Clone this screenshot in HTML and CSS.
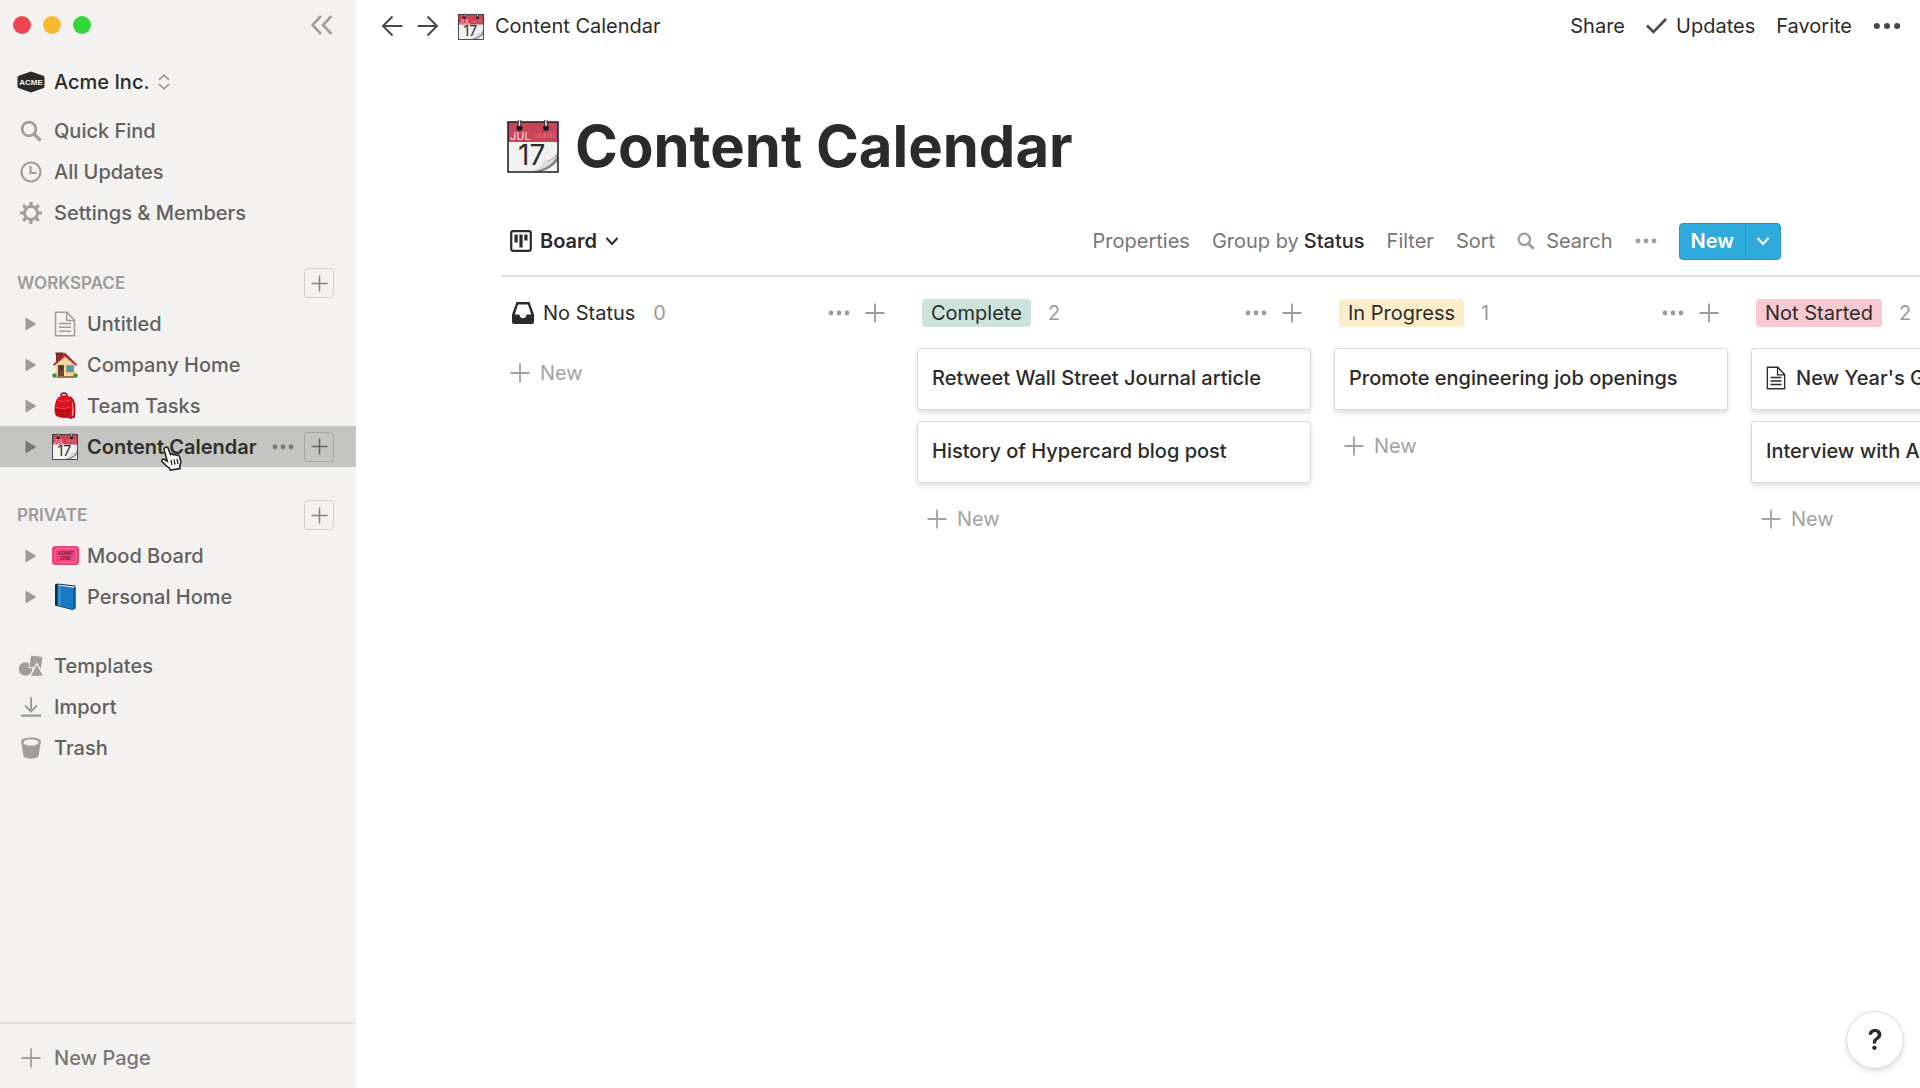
FILE: index.html
```html
<!DOCTYPE html>
<html lang="en">
<head>
<meta charset="utf-8">
<meta name="viewport" content="width=device-width, initial-scale=1">
<title>Content Calendar</title>
<link rel="stylesheet" href="styles.css">
</head>
<body>
<svg class="defs" width="0" height="0" aria-hidden="true">
  <symbol id="plus" viewBox="0 0 20 20"><path d="M10 0.5v19M0.5 10h19" fill="none" stroke="currentColor" stroke-width="1.8"/></symbol>
  <symbol id="dots" viewBox="0 0 22 6"><circle cx="3" cy="3" r="2.4" fill="currentColor"/><circle cx="11" cy="3" r="2.4" fill="currentColor"/><circle cx="19" cy="3" r="2.4" fill="currentColor"/></symbol>
  <symbol id="caret" viewBox="0 0 12 14"><path d="M0.5 0.5 11.5 7 0.5 13.5z" fill="currentColor"/></symbol>
  <symbol id="chevron" viewBox="0 0 14 10"><path d="M1.5 2 7 8l5.500-6" fill="none" stroke="currentColor" stroke-width="2"/></symbol>
  <symbol id="search" viewBox="0 0 22 22"><circle cx="9" cy="9" r="6.900" fill="none" stroke="currentColor" stroke-width="2.800"/><path d="m14 14 6.500 6.500" stroke="currentColor" stroke-width="3.400"/></symbol>
  <symbol id="page" viewBox="0 0 22 26"><path d="M1.500 1.200H13l7.500 8v15.600h-19zM12.700 1.500v8h7.500M5 12.500h12M5 16.300h12M5 20.200h12" fill="none" stroke="currentColor" stroke-width="1.500"/></symbol>
  <symbol id="calendar" viewBox="0 0 52 54">
    <rect x="1" y="3" width="50" height="50" fill="#f1f1f2"/>
    <path d="M1 3h50v20H1z" fill="#cb4559"/>
    <path d="M29 19v-4M32 19v-5M35 19v-4M38 19v-5M41 19v-5M44 19v-6M47 19v-6" stroke="#e37f8c" stroke-width="1"/>
    <text x="3" y="21" font-size="11" font-weight="400" fill="#f8dfe2">JUL</text>
    <text x="11" y="46" font-size="28" font-weight="400" fill="#2b2c30">17</text>
    <path d="M26 52c7-2 10-5 11-10 6 0 10-3 14-9v19z" fill="#a2a2a4"/>
    <path d="M26 52c5-2 9-5 11-10 3 1 8 0 14-6-6 10-12 14-25 16z" fill="#dedee0"/>
    <path d="M28 52.500c9-2 17-7 23-15v15z" fill="#55565a" opacity=".4"/>
    <path d="M34 52.500c7-2 12-5 17-11v11z" fill="#f4f4f5"/>
    <rect x="1" y="3" width="50" height="50" fill="none" stroke="#26272b" stroke-width="1.600"/>
    <circle cx="12.500" cy="9" r="3" fill="#1c1c1e"/><circle cx="39" cy="9" r="3" fill="#1c1c1e"/>
    <path d="M12.500 1v7M39 1v7" stroke="#2c2c2e" stroke-width="3.400"/>
    <path d="M12.500 1v6M39 1v6" stroke="#e8e8ea" stroke-width="1.500"/>
  </symbol>
</svg>

<aside class="sidebar">
  <div class="window-bar">
    <div class="lights"><i class="light red"></i><i class="light yellow"></i><i class="light green"></i></div>
    <button class="icon-btn" aria-label="Collapse sidebar">
      <svg width="22" height="20" viewBox="0 0 22 20"><path d="M10 1 1.500 10 10 19M20.500 1 12 10l8.500 9" fill="none" stroke="#a09f9d" stroke-width="2.600"/></svg>
    </button>
  </div>

  <button class="row workspace">
    <span class="row-icon"><svg width="28" height="22" viewBox="0 0 28 22"><path d="M14 .5 25.500 4.500q2 .5 2 2v9q0 1.500-2 2L14 21.500 2.500 17.500q-2-.5-2-2v-9q0-1.500 2-2z" fill="#2c2b29"/><text class="logo-text" x="14" y="14" text-anchor="middle">ACME</text></svg></span>
    <span>Acme Inc.</span>
    <svg class="updown" width="12" height="16" viewBox="0 0 12 16"><path d="M1 5.800 6 1.200l5 4.600M1 10.200l5 4.600 5-4.600" fill="none" stroke="#9b9a98" stroke-width="1.700"/></svg>
  </button>

  <nav class="group">
    <a class="row" href="#"><span class="row-icon"><svg width="22" height="22"><use href="#search"/></svg></span>Quick Find</a>
    <a class="row" href="#"><span class="row-icon"><svg width="22" height="22" viewBox="0 0 22 22"><circle cx="11" cy="11" r="9.500" fill="none" stroke="currentColor" stroke-width="2.200"/><path d="M10.500 5v7h6" fill="none" stroke="currentColor" stroke-width="2.200"/></svg></span>All Updates</a>
    <a class="row" href="#"><span class="row-icon"><svg width="22" height="22" viewBox="-11 -11 22 22"><circle r="6.500" fill="none" stroke="currentColor" stroke-width="2.800"/><path d="M0-7v-4M0 7v4M-7 0h-4M7 0h4M5-5l2.800-2.800M-5-5l-2.800-2.800M5 5l2.800 2.800M-5 5l-2.800 2.800" stroke="currentColor" stroke-width="3.200"/></svg></span>Settings &amp; Members</a>
  </nav>

  <section class="group">
    <header class="group-head"><h2>WORKSPACE</h2><button class="add-btn" aria-label="Add workspace page"><svg width="17" height="17"><use href="#plus"/></svg></button></header>
    <a class="row page-row" href="#"><svg class="caret" width="12" height="14"><use href="#caret"/></svg><span class="emoji"><svg width="22" height="26"><use href="#page"/></svg></span>Untitled</a>
    <a class="row page-row" href="#"><svg class="caret" width="12" height="14"><use href="#caret"/></svg><span class="emoji"><svg width="26" height="28" viewBox="0 0 26 28">
      <path d="M4 2h7v9H4z" fill="#8e2b2d"/><path d="M3.500 1.500h8v2h-8z" fill="#6e2023"/>
      <path d="M3.500 13 13 4l10 9v13h-19.500z" fill="#f2d6a0"/><path d="M1 13.500 13 1.500l12 12-1 1.500L13 5.500 2 15z" fill="#a92d31"/>
      <path d="M6 14h6v12H6z" fill="#73432f"/><path d="M7.500 15.500h3v3h-3z" fill="#39363a"/><path d="M14.500 14.500h7v6.500h-7z" fill="#4d9ab0" stroke="#b98f5d"/>
      <circle cx="2.500" cy="24.500" r="2.300" fill="#4d8b35"/><circle cx="23.500" cy="24.500" r="2.300" fill="#4d8b35"/><path d="M5 25h17v2H5z" fill="#9a7651"/></svg></span>Company Home</a>
    <a class="row page-row" href="#"><svg class="caret" width="12" height="14"><use href="#caret"/></svg><span class="emoji"><svg width="24" height="27" viewBox="0 0 24 27">
      <path d="M17 5c5 3 5 14 4 20l-5 1" fill="none" stroke="#a40c17" stroke-width="2"/><path d="M8 4c0-4 6-4 6 0" fill="none" stroke="#8e0b15" stroke-width="1.500"/>
      <path d="M3 9C4 3 15 1 18 6c2 4 2 14 1 19-4 2-12 1-16-1C1 20 1 14 3 9z" fill="#dc1220"/><path d="M2 15c4 2 11 2 15 0v9c-4 2-11 1-14-1z" fill="#c00d1a"/><path d="M5 8c3 2 8 2 11 0M2.500 15c4 2 10 2 14 0" fill="none" stroke="#f5505a"/></svg></span>Team Tasks</a>
    <div class="row page-row active">
      <svg class="caret" width="12" height="14"><use href="#caret"/></svg><span class="emoji"><svg width="26" height="27"><use href="#calendar"/></svg></span><a class="page-link" href="#" aria-current="page">Content Calendar</a>
      <button class="icon-btn more" aria-label="Page options"><svg width="22" height="6"><use href="#dots"/></svg></button>
      <button class="add-btn" aria-label="Add subpage"><svg width="17" height="17"><use href="#plus"/></svg></button>
      <svg class="cursor" width="24" height="26" viewBox="0 0 24 26"><path d="M5 2.500c1.500-1 3 0 3.500 1.500l2 5.500c1-1 2.500-.8 3 .3 1-.7 2.300-.4 2.800.5 1-.6 2.500-.3 3 1l1.400 4.200c.6 2.500-.6 4-1 6l.3 2-9.700 1.500-1-2c-2.500-1-4.500-3.800-7.300-6.500-.8-1.500.8-3 2.500-2l2.800 1.700L4.200 5c-.3-1 0-2 .8-2.500z" fill="#fff" stroke="#252525" stroke-width="1.600"/><path d="m11 15 1 5m2-5.500 1 5m2-5.500 1 5" stroke="#252525" stroke-width="1.300"/></svg>
    </div>
  </section>

  <section class="group">
    <header class="group-head"><h2>PRIVATE</h2><button class="add-btn" aria-label="Add private page"><svg width="17" height="17"><use href="#plus"/></svg></button></header>
    <a class="row page-row" href="#"><svg class="caret" width="12" height="14"><use href="#caret"/></svg><span class="emoji"><svg width="27" height="19" viewBox="0 0 27 19"><path d="M2 0h23l2 2v15l-2 2H2l-2-2V2z" fill="#ef4479"/><rect x="3" y="2.500" width="21" height="14" rx="2" fill="#f7437c" stroke="#fb6d98"/><text class="ticket-text" x="13.500" y="9" text-anchor="middle">ADMIT</text><text class="ticket-text" x="13.500" y="14" text-anchor="middle">ONE</text></svg></span>Mood Board</a>
    <a class="row page-row" href="#"><svg class="caret" width="12" height="14"><use href="#caret"/></svg><span class="emoji"><svg width="22" height="27" viewBox="0 0 22 27"><path d="M1 1.500 3.500.5l18 2v23l-3 1.500L1 22.500z" fill="#102c46"/><path d="m3.500 2.500 16 2.500v21.500l-16-4z" fill="#1979c2"/><path d="m3.500 2.500 16 2.500 2-1.500-17-2z" fill="#cfe0ec"/><path d="M19.500 5l2-1.500v22l-2 1z" fill="#0f5d9d"/><path d="m4 2.500 3 .5v20l-3-1z" fill="#3392d4"/></svg></span>Personal Home</a>
  </section>

  <nav class="group">
    <a class="row" href="#"><span class="row-icon"><svg width="26" height="22" viewBox="0 0 26 22"><circle cx="7.500" cy="14" r="6.800" fill="currentColor"/><path d="m12.500 0 12.500 1.500-1.500 12-12.500-1z" fill="currentColor" stroke="#f3f2f0"/><path d="M18.800 8.500 26 21.500H12z" fill="currentColor" stroke="#f3f2f0" stroke-width="1.400"/></svg></span>Templates</a>
    <a class="row" href="#"><span class="row-icon"><svg width="20" height="20" viewBox="0 0 20 20"><path d="M10 0v14M4 8.500l6 6 6-6" fill="none" stroke="currentColor" stroke-width="2"/><path d="M0 18.600h20" stroke="currentColor" stroke-width="2.400"/></svg></span>Import</a>
    <a class="row" href="#"><span class="row-icon"><svg width="20" height="22" viewBox="0 0 20 22"><path d="M0 4.500C0-1 20-1 20 4.500L17.500 19c-1 3.500-14 3.500-15 0z" fill="currentColor"/><ellipse cx="10" cy="5.500" rx="7.500" ry="3.200" fill="#f3f2f0"/></svg></span>Trash</a>
  </nav>

  <button class="row new-page"><span class="row-icon"><svg width="20" height="20"><use href="#plus"/></svg></span>New Page</button>
</aside>

<main class="main">
  <header class="topbar">
    <button class="icon-btn" aria-label="Back"><svg width="22" height="22" viewBox="0 0 22 22"><path d="M21.500 11H2M11.500 1.500 2 11l9.500 9.500" fill="none" stroke="currentColor" stroke-width="2"/></svg></button>
    <button class="icon-btn forward" aria-label="Forward"><svg width="22" height="22" viewBox="0 0 22 22"><path d="M.5 11H20M10.500 1.500 20 11l-9.500 9.500" fill="none" stroke="currentColor" stroke-width="2"/></svg></button>
    <a class="crumb" href="#"><svg width="26" height="27"><use href="#calendar"/></svg>Content Calendar</a>
    <div class="actions">
      <button>Share</button>
      <button class="updates"><svg width="21" height="16" viewBox="0 0 21 16"><path d="m1 7.500 6.500 6.500L20 1" fill="none" stroke="#4a4947" stroke-width="2.600"/></svg>Updates</button>
      <button>Favorite</button>
      <button class="icon-btn" aria-label="More"><svg width="28" height="8"><use href="#dots"/></svg></button>
    </div>
  </header>

  <h1 class="title"><svg width="52" height="54"><use href="#calendar"/></svg>Content Calendar</h1>

  <div class="toolbar">
    <button class="view"><svg width="22" height="22" viewBox="0 0 22 22"><rect x="1.200" y="1.200" width="19.600" height="19.600" rx="2" fill="none" stroke="currentColor" stroke-width="2.200"/><path d="M4.500 4.500h3.200v8H4.500zM9.400 4.500h3.200v13H9.400zM14.300 4.500h3.200v6h-3.200z" fill="currentColor"/></svg>Board<svg width="14" height="10"><use href="#chevron"/></svg></button>
    <div class="tools-right">
      <button>Properties</button>
      <button>Group by <b>Status</b></button>
      <button>Filter</button>
      <button>Sort</button>
      <button class="find"><svg width="18" height="18"><use href="#search"/></svg>Search</button>
      <button class="icon-btn faint" aria-label="View options"><svg width="22" height="6"><use href="#dots"/></svg></button>
      <div class="split"><button class="split-main">New</button><button class="split-arrow" aria-label="New options"><svg width="14" height="10"><use href="#chevron"/></svg></button></div>
    </div>
  </div>

  <div class="board">
    <section class="column">
      <header class="col-head no-status"><svg width="22" height="22" viewBox="0 0 22 22"><path d="M4.500 0h13L22 12.500V20q0 2-2 2H2q-2 0-2-2v-7.500zM6 2.500 2.800 12.500h4.700c0 5 7 5 7 0h4.700L16 2.500z" fill="#2c2b29" fill-rule="evenodd"/></svg><h3>No Status</h3><span class="count">0</span><div class="col-actions"><button class="icon-btn" aria-label="Column options"><svg width="22" height="6"><use href="#dots"/></svg></button><button class="icon-btn" aria-label="Add card"><svg width="20" height="20"><use href="#plus"/></svg></button></div></header>
      <button class="add-card"><svg width="20" height="20"><use href="#plus"/></svg>New</button>
    </section>
    <section class="column">
      <header class="col-head"><h3 class="tag complete">Complete</h3><span class="count">2</span><div class="col-actions"><button class="icon-btn" aria-label="Column options"><svg width="22" height="6"><use href="#dots"/></svg></button><button class="icon-btn" aria-label="Add card"><svg width="20" height="20"><use href="#plus"/></svg></button></div></header>
      <a class="card" href="#">Retweet Wall Street Journal article</a>
      <a class="card" href="#">History of Hypercard blog post</a>
      <button class="add-card"><svg width="20" height="20"><use href="#plus"/></svg>New</button>
    </section>
    <section class="column">
      <header class="col-head"><h3 class="tag progress">In Progress</h3><span class="count">1</span><div class="col-actions"><button class="icon-btn" aria-label="Column options"><svg width="22" height="6"><use href="#dots"/></svg></button><button class="icon-btn" aria-label="Add card"><svg width="20" height="20"><use href="#plus"/></svg></button></div></header>
      <a class="card" href="#">Promote engineering job openings</a>
      <button class="add-card"><svg width="20" height="20"><use href="#plus"/></svg>New</button>
    </section>
    <section class="column">
      <header class="col-head"><h3 class="tag waiting">Not Started</h3><span class="count">2</span></header>
      <a class="card" href="#"><svg width="20" height="24"><use href="#page"/></svg>New Year's G</a>
      <a class="card" href="#">Interview with An</a>
      <button class="add-card"><svg width="20" height="20"><use href="#plus"/></svg>New</button>
    </section>
  </div>
</main>
<button class="help" aria-label="Help">?</button>
</body>
</html>
```
FILE: styles.css
```css
* { box-sizing: border-box; }

body {
  margin: 0;
  display: flex;
  min-height: 100vh;
  background: #fff;
  color: #2c2b29;
  font: 400 20px/28px Inter, "Liberation Sans", sans-serif;
}

.defs { position: absolute; }
svg { display: block; flex: none; }
a { color: inherit; text-decoration: none; }
h1, h2, h3 { margin: 0; }

button {
  display: flex;
  align-items: center;
  padding: 0;
  border: 0;
  background: none;
  color: inherit;
  font: inherit;
  white-space: nowrap;
  cursor: pointer;
}

/* Sidebar */
.sidebar {
  flex: none;
  width: 356px;
  display: flex;
  flex-direction: column;
  background: #f3f2f0;
  color: #62615e;
  font-weight: 500;
}

.window-bar {
  display: flex;
  align-items: center;
  justify-content: space-between;
  height: 50px;
  padding: 0 23px 0 13px;
}

.lights { display: flex; gap: 12px; }
.light { width: 18px; height: 18px; border-radius: 50%; }
.red { background: #ee4553; }
.yellow { background: #f5b92f; }
.green { background: #34d63d; }

.row {
  position: relative;
  display: flex;
  align-items: center;
  width: 100%;
  height: 41px;
  padding: 0 22px 0 16px;
}

.row-icon {
  display: flex;
  justify-content: center;
  width: 30px;
  margin-right: 8px;
  color: #9f9e9c;
}

.logo-text { font: 700 8px "Liberation Sans", sans-serif; fill: #f3f2f0; }
.ticket-text { font: 700 5px "Liberation Sans", sans-serif; fill: #7e1939; }
.workspace { margin: 11px 0 8px; color: #2c2b29; }
.updown { margin-left: 8px; }
.group { margin-bottom: 28px; }
nav.group { margin-bottom: 30px; }

.group-head {
  display: flex;
  align-items: center;
  justify-content: space-between;
  height: 40px;
  padding: 0 22px 0 17px;
}

.group-head h2 { color: #9c9b99; font-size: 17px; font-weight: 600; }

.add-btn {
  justify-content: center;
  width: 30px;
  height: 30px;
  border: 1px solid #cfcecc;
  border-radius: 4px;
  color: #83827f;
}

.page-row { padding: 0 22px 0 25px; }
.caret { color: #9c9b99; }

.emoji {
  display: flex;
  justify-content: center;
  width: 28px;
  margin: 0 8px 0 14px;
  color: #9f9e9c;
}

.active { background: #c4c5c1; color: #2f2e2b; font-weight: 600; }
.active .caret, .active .more { color: #777874; }
.active .add-btn { border-color: #a5a6a2; color: #666764; }
.more { margin: 0 10px 0 auto; }
.page-link { flex: none; }
.cursor { position: absolute; left: 160px; top: 19px; }

.new-page {
  height: 66px;
  margin-top: auto;
  padding-top: 4px;
  border-top: 2px solid #e0dfdd;
  color: #777673;
}

/* Main area */
.main { flex: 1; min-width: 0; overflow: hidden; }

.topbar {
  display: flex;
  align-items: center;
  height: 52px;
  padding: 0 19px 0 25px;
}

.topbar .icon-btn { color: #4a4947; }
.forward { margin-left: 14px; }
.crumb { display: flex; align-items: center; gap: 11px; margin-left: 19px; }
.actions { display: flex; align-items: center; gap: 21px; margin-left: auto; }
.updates { gap: 9px; }

.title {
  display: flex;
  align-items: center;
  gap: 16px;
  margin: 56px 145px 0 151px;
  font-size: 58px;
  font-weight: 700;
  line-height: 76px;
  white-space: nowrap;
}

.toolbar {
  display: flex;
  align-items: center;
  justify-content: space-between;
  height: 70px;
  margin: 23px 0 0 145px;
  padding: 0 139px 0 9px;
  border-bottom: 2px solid #dededd;
}

.view { gap: 8px; font-weight: 600; }
.tools-right { display: flex; align-items: center; gap: 22px; color: #777673; }
.tools-right b { margin-left: 5px; color: #2c2b29; font-weight: 500; }
.find { gap: 11px; }
.find svg, .faint { color: #9f9e9c; }

.split {
  display: flex;
  height: 37px;
  border: 1px solid #2a94bd;
  border-radius: 4px;
  background: #2eaadc;
  color: #fff;
  overflow: hidden;
}

.split-main { padding: 0 11px; font-weight: 600; }
.split-arrow { padding: 0 10px; border-left: 1px solid #2795c1; }

/* Board */
.board {
  display: flex;
  gap: 23px;
  margin-left: 144px;
  overflow-x: auto;
  scrollbar-width: none;
}

.column {
  flex: none;
  display: flex;
  flex-direction: column;
  gap: 11px;
  width: 394px;
  padding-bottom: 12px;
}

.col-head {
  display: flex;
  align-items: center;
  height: 60px;
  padding: 12px 9px 0 5px;
}

.col-head h3 { font-size: 20px; font-weight: 400; }
.no-status { padding-left: 12px; gap: 9px; }
.tag { padding: 0 9px; border-radius: 4px; }
.complete { background: #cbe3da; }
.progress { background: #fbeccb; }
.waiting { background: #f8c9d0; }
.count { margin-left: 17px; color: #9c9b99; }
.no-status .count { margin-left: 9px; }

.col-actions {
  display: flex;
  align-items: center;
  gap: 15px;
  margin-left: auto;
  color: #9c9b99;
}

.card {
  display: flex;
  align-items: center;
  gap: 10px;
  height: 62px;
  padding: 0 15px 3px;
  border-radius: 4px;
  box-shadow: inset 0 0 0 1px #dadad9, 0 3px 5px #00000020;
  font-weight: 500;
  white-space: nowrap;
}

.add-card { gap: 10px; height: 50px; padding-left: 10px; color: #a3a2a0; }

.help {
  position: fixed;
  right: 17px;
  bottom: 20px;
  justify-content: center;
  width: 56px;
  height: 56px;
  border-radius: 50%;
  background: #fff;
  box-shadow: 0 0 0 1px #dadad9, 0 3px 6px #00000026;
  font-size: 28px;
  font-weight: 600;
}
```
